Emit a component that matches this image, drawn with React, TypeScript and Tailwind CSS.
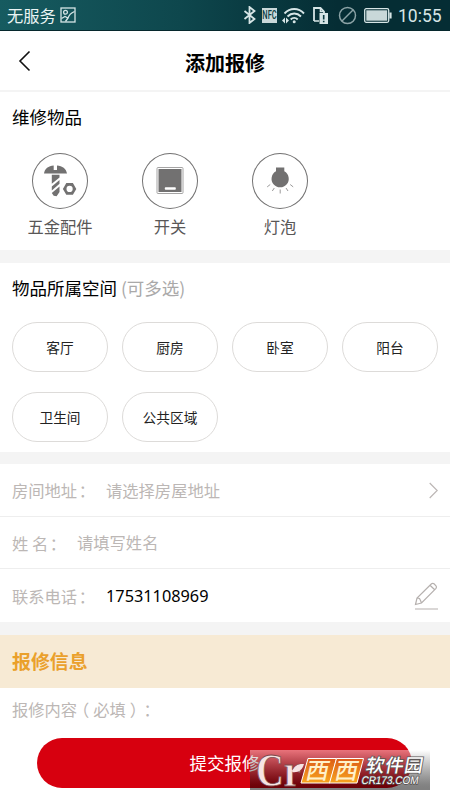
import React from 'react';

const ROOMS = ['客厅', '厨房', '卧室', '阳台', '卫生间', '公共区域'];

const ScrewIcon = () => (
  <svg width="56" height="56" viewBox="0 0 56 56" fill="#727171">
    <path d="M12 20.500c.6-4.800 4.500-7.900 9.700-8.100v4.600h3.300v-4.600c5.200.2 9.400 3.300 10 8.100z" />
    <path d="M19.800 21.700h7.700v2.800l-7.700 6.300zM27.500 27v3.700L19.800 37.500v-4zM27.500 33.500v5.500l-2.900 4.300-2.900-.6-1.900-2.700z" />
    <path fillRule="evenodd" d="M34.300 30h6.600l3.400 5.900-3.400 5.900h-6.600l-3.400-5.900zM37.600 32.800a3.100 3.100 0 1 0 0 6.200 3.100 3.100 0 0 0 0-6.200z" />
  </svg>
);

const SwitchIcon = () => (
  <svg width="56" height="56" viewBox="0 0 56 56">
    <rect x="15" y="14.500" width="26" height="26" rx="1" fill="#fff" stroke="#a5a4a4" strokeWidth="1" />
    <rect x="16.500" y="16" width="23" height="23" fill="#727171" />
    <rect x="22.800" y="34.300" width="11" height="2.400" rx=".8" fill="#fff" />
  </svg>
);

const BulbIcon = () => (
  <svg width="56" height="56" viewBox="0 0 56 56">
    <path d="M24 14.500h8.300v3.700a8.600 8.600 0 1 1-8.300 0z" fill="#727171" />
    <path d="M18.200 31.500l-3 2.400M22.300 35l-2 3M28.200 36.500v4M34 35l2 3M38.200 31.500l3 2.400" stroke="#9a9999" strokeWidth="1" fill="none" />
  </svg>
);

const ITEMS = [
  { name: '五金配件', icon: <ScrewIcon /> },
  { name: '开关', icon: <SwitchIcon /> },
  { name: '灯泡', icon: <BulbIcon /> },
];

const StatusBar = () => (
  <div className="flex h-[31px] items-center border-b border-[#06282d] bg-linear-to-r from-[#165b60] via-[#0e474d] via-40% to-[#052d34] to-75% pl-[7px] pr-2 text-[#d6e5e6]">
    <span className="text-[16.300px] leading-none text-[#eaf4f4]">无服务</span>
    <svg className="ml-1" width="16" height="16" viewBox="0 0 16 16" fill="none" stroke="currentColor" strokeWidth="1.300">
      <rect x="1" y="1" width="14" height="14" />
      <circle cx="5.500" cy="5.300" r="1.900" />
      <path d="M1.500 11.500l3.500-2 3 1.500c1-3 3-5 6.500-6.500M5.500 14.500L8 11" />
    </svg>
    <div className="ml-auto flex items-center">
      <svg width="14" height="18" viewBox="0 0 14 18" fill="none" stroke="currentColor" strokeWidth="1.800">
        <path d="M1.500 5l10 8-5 4V1l5 4-10 8" />
      </svg>
      <span className="ml-[5px] flex h-[15px] w-[15px] items-center justify-center bg-[#c9d8d9] font-['Roboto',sans-serif] text-[12px] font-medium text-[#0a3b42]">
        <span className="inline-block scale-x-[.62]">NFC</span>
      </span>
      <svg className="ml-[5px]" width="23" height="17" viewBox="0 0 23 17" fill="none" stroke="currentColor" strokeWidth="1.900">
        <path d="M2.500 6.500C8 .5 16.500.5 22 6.500M5.500 9.500c4-4 9.500-4 13.500 0M8.700 12.500c2-2.200 5-2.200 7 0" />
        <circle cx="12.200" cy="14.700" r="1.500" fill="currentColor" stroke="none" />
        <path d="M0 13.500l3-3v6zM7 13.500l-3-3v6z" fill="currentColor" stroke="none" />
      </svg>
      <svg className="ml-2" width="15" height="17" viewBox="0 0 15 17">
        <path d="M1 14V1h6.500L11 4.500V6" fill="none" stroke="currentColor" strokeWidth="1.800" />
        <path d="M1 14h5M7.500 1v3.500H11" fill="none" stroke="currentColor" strokeWidth="1.600" />
        <rect x="6.500" y="6" width="8.500" height="11" fill="currentColor" />
        <path d="M10.700 8v4.500M10.700 13.700v1.600" stroke="#0a3b42" strokeWidth="1.600" />
      </svg>
      <svg className="ml-[10px]" width="19" height="19" viewBox="0 0 19 19" fill="none" stroke="#8ca3a6" strokeWidth="1.500">
        <circle cx="9.500" cy="9.500" r="8" />
        <path d="M15 4L4 15" />
      </svg>
      <svg className="ml-[7px]" width="28" height="15" viewBox="0 0 28 15">
        <rect x=".7" y=".7" width="24" height="13.600" rx="1.500" fill="none" stroke="currentColor" strokeWidth="1.300" />
        <rect x="2.300" y="2.300" width="20.900" height="10.400" fill="#c9d8d9" />
        <path d="M26.500 4.500v6" stroke="currentColor" strokeWidth="2.200" />
      </svg>
      <span className="ml-[6px] mt-[3px] w-[44px] whitespace-nowrap font-['Roboto',sans-serif] text-[17.500px] leading-none">10:55</span>
    </div>
  </div>
);

const Gap = () => <div className="h-[12.500px] bg-[#f4f4f4]" />;

const Colon = () => <span className="ml-[1.500px]">：</span>;

const Watermark = () => (
  <div className="absolute left-[250px] top-[750px] h-10 w-[180px] bg-linear-to-b from-white/45 to-black/50">
    <svg className="overflow-visible" width="180" height="40" viewBox="0 0 180 40">
      <defs>
        <linearGradient id="wmOrange" x1="0" y1="0" x2="0" y2="1">
          <stop offset="0" stopColor="#dc5b18" />
          <stop offset="1" stopColor="#f8a51e" />
        </linearGradient>
      </defs>
      <text x="6" y="36" fontSize="47" textLength="45" lengthAdjust="spacingAndGlyphs" fill="#f7e3e3" stroke="#7d4b4e" strokeWidth=".8" fontWeight="700" fontFamily="'Liberation Serif', serif">Cr</text>
      <path d="M42 22c2-6 6-8.500 12-8-1.500 6-6 9-12 8z" fill="#f7e3e3" />
      <g stroke="#fff" strokeWidth="1" fill="url(#wmOrange)">
        <path d="M58 8.500h28.500L80 33H51z" />
        <path d="M86.500 8.500h27L107 33H79.500z" />
      </g>
      <g transform="skewX(-12)" fill="#fff1c9" fontFamily="'Noto Sans CJK SC', sans-serif" fontWeight="500" fontSize="23">
        <text x="61" y="29">西</text>
        <text x="90" y="29">西</text>
      </g>
      <g transform="skewX(-10)" fill="#fff" stroke="#5a5555" strokeWidth="1.600" paintOrder="stroke">
        <text x="119" y="22.500" fontSize="18.500" textLength="57" fontWeight="500" fontFamily="'Noto Sans CJK SC', sans-serif">软件园</text>
        <text x="117" y="34.300" fontSize="11" textLength="57" lengthAdjust="spacingAndGlyphs" fontFamily="'Liberation Sans', sans-serif">CR173.COM</text>
      </g>
    </svg>
  </div>
);

export default function App() {
  return (
    <div className="relative h-[800px] w-[450px] overflow-hidden bg-white font-['Noto_Sans_CJK_SC',sans-serif] text-black">
      <StatusBar />
      <header className="flex h-[61px] items-center border-b-2 border-[#f4f4f4]">
        <svg className="ml-[18px]" width="14" height="22" viewBox="0 0 14 22" fill="none" stroke="#111" strokeWidth="1.600">
          <path d="M11.500 1.500L2 11l9.500 9.500" />
        </svg>
        <h1 className="ml-[153px] mt-1 text-[20px] font-bold leading-none">添加报修</h1>
      </header>

      <section className="h-[158px] pt-4">
        <h2 className="pl-3 text-[17.500px] leading-[18px]">维修物品</h2>
        <div className="mt-[27px] flex gap-[10px] pl-[10px]">
          {ITEMS.map((item) => (
            <div key={item.name} className="flex w-[100px] flex-col items-center">
              <div className="h-14 w-14 rounded-full shadow-[inset_0_0_0_1px_#727171]">{item.icon}</div>
              <span className="mt-[7px] text-[16.300px] leading-5 text-[#595757]">{item.name}</span>
            </div>
          ))}
        </div>
      </section>
      <Gap />

      <section className="h-[189px] px-3 pt-4">
        <h2 className="text-[17.500px] leading-[18px]">
          物品所属空间 <span className="text-[#aaa9a9]">(可多选)</span>
        </h2>
        <div className="mt-[25px] grid grid-cols-[repeat(4,96px)] gap-x-[14px] gap-y-5">
          {ROOMS.map((room) => (
            <button key={room} className="h-[50px] rounded-full border border-[#dddbd9] pt-0.5 text-[13.700px] text-[#222]">
              {room}
            </button>
          ))}
        </div>
      </section>
      <Gap />

      <section className="text-[16.300px] text-[#bcb7b5]">
        <div className="flex h-[53px] items-center border-b border-[#eee] px-3">
          <span className="w-[94px]">房间地址<Colon /></span>
          <span>请选择房屋地址</span>
          <svg className="ml-auto" width="9" height="17" viewBox="0 0 9 17" fill="none" stroke="currentColor" strokeWidth="1.200">
            <path d="M.7 1l7.500 7.500L.7 16" />
          </svg>
        </div>
        <div className="flex h-[52px] items-center border-b border-[#eee] px-3">
          <span className="mt-0.5 w-[65px]">姓 名<Colon /></span>
          <span>请填写姓名</span>
        </div>
        <div className="flex h-[53px] items-center px-3">
          <span className="mt-0.5 w-[94px]">联系电话<Colon /></span>
          <span className="mt-0.5 font-['Noto_Sans',sans-serif] text-black">17531108969</span>
          <svg className="ml-auto" width="24" height="28" viewBox="0 0 24 28" fill="none" stroke="#b5b0ae" strokeWidth="1.200">
            <path d="M1.500 22.500l1.500-6.500L17.500 1.800q1.300-1 2.500 0l2 2q1 1.200 0 2.500L7.500 21zM3 16l2.500.5 1 2 1 2.500M16 3.300l4.700 4.500M1 27h23" />
          </svg>
        </div>
      </section>
      <Gap />

      <h2 className="flex h-[53px] items-center bg-[#f7ead4] pl-3 text-[18.900px] font-bold text-[#eaa02b]">报修信息</h2>
      <p className="mt-[9px] flex pl-3 text-[16.300px] leading-6 text-[#bcb7b5]">
        <span>报修内容</span>
        <span className="ml-[4px] [font-feature-settings:'halt']">（</span>
        <span className="ml-[4px]">必填</span>
        <span className="ml-[4px] [font-feature-settings:'halt']">）</span>
        <span className="ml-[5.500px] [font-feature-settings:'halt']">：</span>
      </p>
      <button className="ml-[37px] mt-[17px] flex h-[50px] w-[375px] items-center justify-center rounded-full bg-[#d7000f] pt-0.5 text-[17.500px] text-white">
        提交报修
      </button>
      <Watermark />
    </div>
  );
}
